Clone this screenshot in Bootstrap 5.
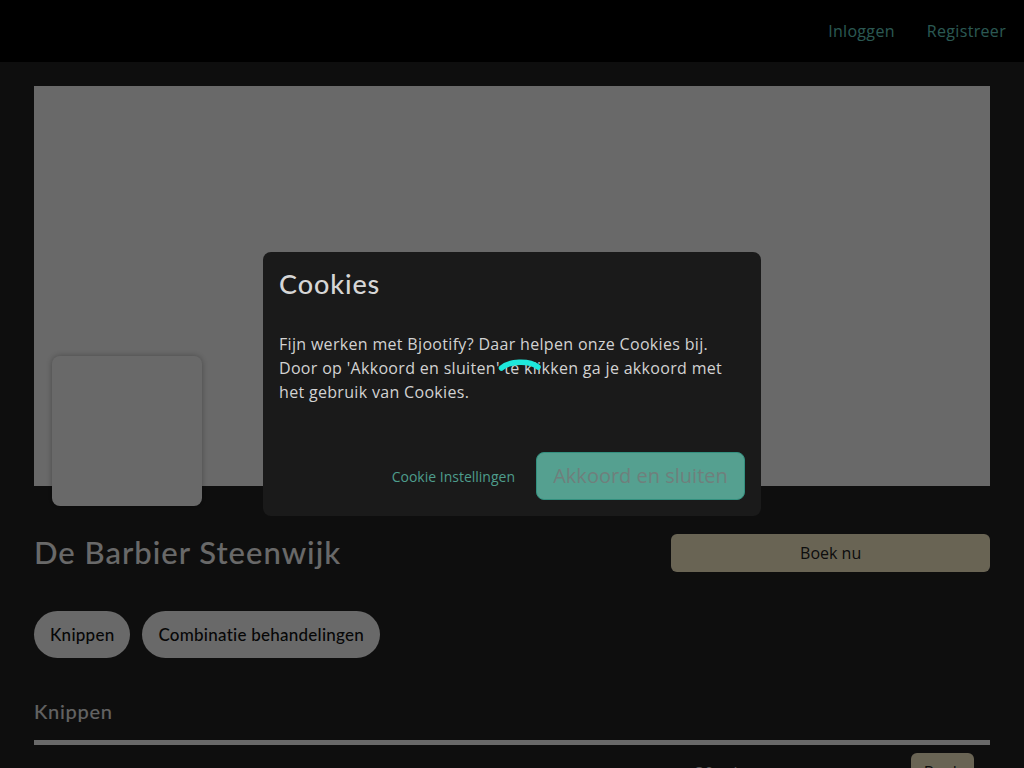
<!DOCTYPE html>
<html lang="nl">
<head>
<meta charset="utf-8">
<title>De Barbier Steenwijk</title>
<link href="https://cdn.jsdelivr.net/npm/bootstrap@5.3.0/dist/css/bootstrap.min.css" rel="stylesheet">
<style>
html,body{height:768px;overflow:hidden}
body{background:#232323;font-family:"Open Sans","Liberation Sans",sans-serif;color:#fff;letter-spacing:.32px}
.head-font{font-family:Lato,"Open Sans",sans-serif;letter-spacing:0;font-variant-ligatures:none}
.top-bar{height:62px;background:#000;padding:0 18px 0 0}
.top-link{color:#69d6c8;text-decoration:none;font-size:16px}
.page-wrap{padding:24px 34px 0}
.hero-box{height:400px;background:#fff}
.logo-box{position:absolute;left:18px;top:270px;width:150px;height:150px;background:#fff;border-radius:8px;box-shadow:0 0 6px rgba(0,0,0,.3)}
.title-row{margin-top:48px;height:38px}
.shop-title{font-size:31px;line-height:36px;font-weight:500;color:#fff;letter-spacing:1px;margin:0 0 2px}
.book-main{height:38px;background:#fff2cb;color:#222;border:0;border-radius:6px;font-size:16px;letter-spacing:0}
.pill-row{margin-top:39px;gap:12px}
.pill-item{height:47px;padding:0 16px;border-radius:24px;background:#fff;color:#111;font-size:17px;font-weight:500;border:0;letter-spacing:.25px}
.sect-title{font-size:20px;font-weight:500;margin:41px 0 0;line-height:24px;letter-spacing:.7px;color:#eee}
.sect-line{height:5px;background:#fff;opacity:1;border:0;margin:17px 0 0}
.svc-row{margin-top:8px;padding-right:16px;gap:163px}
.svc-min{color:#ddd;margin-top:8px}
.book-small{height:38px;width:63px;padding:0;background:#fff2cb;color:#222;border:0;border-radius:6px}
.modal-backdrop.show{opacity:.59;background:#000}
.modal-dialog{max-width:498px}
.modal-content{background:#1a1a1a;border:0;border-radius:8px;color:#d2d2d2;height:264px}
.modal-header,.modal-footer{border:0}
.cookie-title{font-size:27px;line-height:32px;font-weight:500;letter-spacing:.9px;color:#d6d6d6}
.modal-body{padding-top:16px}
.modal-body p{line-height:24px;margin:0}
.cookie-link{color:#4e9d8c;font-size:14px;text-decoration:none;letter-spacing:0;margin-right:21px}
.cookie-btn{background:#55a090;border:1px solid #33907f;color:#6f7f7c;font-size:20px;height:48px;width:209px;padding:0;border-radius:8px;letter-spacing:0}
.spin-arc{position:fixed;left:495px;top:355px;z-index:2000}
</style>
</head>
<body>
<nav class="top-bar d-flex align-items-center justify-content-end gap-4">
  <a class="top-link" href="#">Inloggen</a>
  <a class="top-link ms-2" href="#">Registreer</a>
</nav>
<main class="page-wrap">
  <div class="hero-box position-relative"><div class="logo-box"></div></div>
  <div class="row g-0 align-items-center title-row">
    <div class="col-8"><h1 class="shop-title head-font">De Barbier Steenwijk</h1></div>
    <div class="col-4"><button class="btn book-main w-100">Boek nu</button></div>
  </div>
  <div class="d-flex pill-row">
    <button class="btn pill-item head-font">Knippen</button>
    <button class="btn pill-item head-font">Combinatie behandelingen</button>
  </div>
  <h2 class="sect-title head-font">Knippen</h2>
  <hr class="sect-line">
  <div class="d-flex justify-content-end svc-row">
    <span class="svc-min">30 min</span>
    <button class="btn book-small">Boek</button>
  </div>
</main>
<div class="modal-backdrop show"></div>
<div class="modal d-block show" tabindex="-1">
  <div class="modal-dialog modal-dialog-centered">
    <div class="modal-content">
      <div class="modal-header">
        <h5 class="modal-title cookie-title head-font">Cookies</h5>
      </div>
      <div class="modal-body">
        <p>Fijn werken met Bjootify? Daar helpen onze Cookies bij. Door op 'Akkoord en sluiten' te klikken ga je akkoord met het gebruik van Cookies.</p>
      </div>
      <div class="modal-footer p-3 gap-0">
        <a class="cookie-link" href="#">Cookie Instellingen</a>
        <button class="btn cookie-btn m-0">Akkoord en sluiten</button>
      </div>
    </div>
  </div>
</div>
<svg class="spin-arc" width="50" height="20" viewBox="0 0 50 20"><path d="M6.5 13C14 6 34 5 43 12" fill="none" stroke="#1ee8dc" stroke-width="5.5" stroke-linecap="round"/></svg>
</body>
</html>
